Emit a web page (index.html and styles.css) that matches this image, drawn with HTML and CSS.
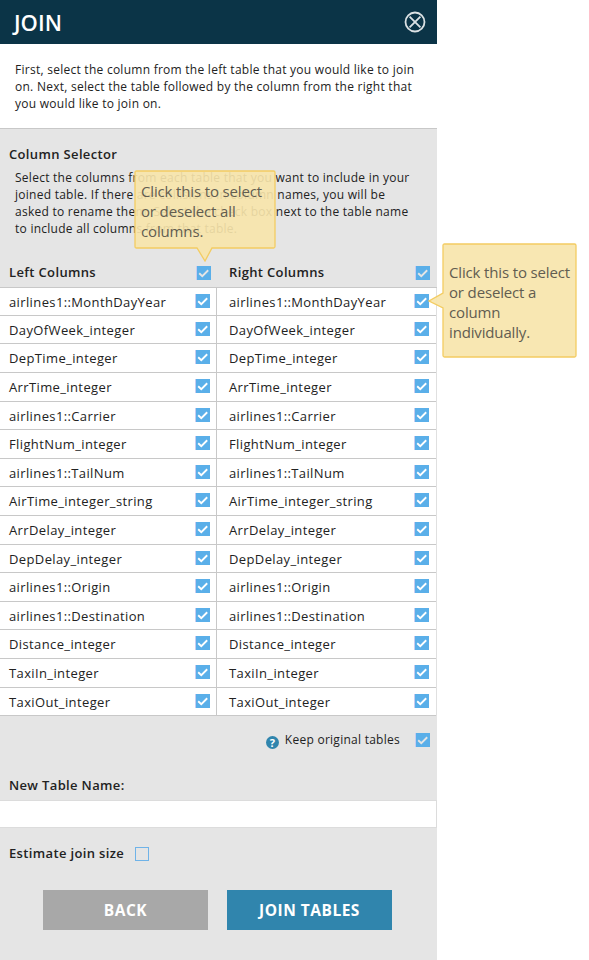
FILE: index.html
```html
<!DOCTYPE html>
<html lang="en">
<head>
<meta charset="utf-8">
<title>Join</title>
<link rel="stylesheet" href="styles.css">
</head>
<body>
<svg class="defs" width="0" height="0" aria-hidden="true">
  <symbol id="check" viewBox="0 0 15 14">
    <rect width="15" height="14" fill="#c9cdf0"/>
    <rect x="1" width="14" height="14" fill="#5aafe9"/>
    <path d="M3.2 7.2L6.3 10.1L12.2 4.3" fill="none" stroke="currentColor" stroke-width="1.9"/>
  </symbol>
</svg>
<main class="panel">
  <header class="bar">
    <h1>JOIN</h1>
    <svg class="close" viewBox="0 0 22 22"><circle cx="11" cy="11" r="9.5"/><path d="M5.6 5.6L16.4 16.4M16.4 5.6L5.6 16.4"/></svg>
  </header>
  <section class="intro">
    <p>First, select the column from the left table that you would like to join<br>on. Next, select the table followed by the column from the right that<br>you would like to join on.</p>
  </section>
  <section class="selector">
    <h2>Column Selector</h2>
    <p>Select the columns from each table that you want to include in your<br>joined table. If there are collisions in column names, you will be<br>asked to rename them. Select the check box next to the table name<br>to include all columns from that table.</p>
  </section>
  <div class="heads">
    <div class="head"><span>Left Columns</span><svg class="box"><use href="#check"/></svg></div>
    <div class="head"><span>Right Columns</span><svg class="box"><use href="#check"/></svg></div>
  </div>
  <div class="lists">
    <ul class="list">
      <li><span>airlines1::MonthDayYear</span><svg class="box"><use href="#check"/></svg></li>
      <li><span>DayOfWeek_integer</span><svg class="box"><use href="#check"/></svg></li>
      <li><span>DepTime_integer</span><svg class="box"><use href="#check"/></svg></li>
      <li><span>ArrTime_integer</span><svg class="box"><use href="#check"/></svg></li>
      <li><span>airlines1::Carrier</span><svg class="box"><use href="#check"/></svg></li>
      <li><span>FlightNum_integer</span><svg class="box"><use href="#check"/></svg></li>
      <li><span>airlines1::TailNum</span><svg class="box"><use href="#check"/></svg></li>
      <li><span>AirTime_integer_string</span><svg class="box"><use href="#check"/></svg></li>
      <li><span>ArrDelay_integer</span><svg class="box"><use href="#check"/></svg></li>
      <li><span>DepDelay_integer</span><svg class="box"><use href="#check"/></svg></li>
      <li><span>airlines1::Origin</span><svg class="box"><use href="#check"/></svg></li>
      <li><span>airlines1::Destination</span><svg class="box"><use href="#check"/></svg></li>
      <li><span>Distance_integer</span><svg class="box"><use href="#check"/></svg></li>
      <li><span>TaxiIn_integer</span><svg class="box"><use href="#check"/></svg></li>
      <li><span>TaxiOut_integer</span><svg class="box"><use href="#check"/></svg></li>
    </ul>
    <ul class="list">
      <li><span>airlines1::MonthDayYear</span><svg class="box"><use href="#check"/></svg></li>
      <li><span>DayOfWeek_integer</span><svg class="box"><use href="#check"/></svg></li>
      <li><span>DepTime_integer</span><svg class="box"><use href="#check"/></svg></li>
      <li><span>ArrTime_integer</span><svg class="box"><use href="#check"/></svg></li>
      <li><span>airlines1::Carrier</span><svg class="box"><use href="#check"/></svg></li>
      <li><span>FlightNum_integer</span><svg class="box"><use href="#check"/></svg></li>
      <li><span>airlines1::TailNum</span><svg class="box"><use href="#check"/></svg></li>
      <li><span>AirTime_integer_string</span><svg class="box"><use href="#check"/></svg></li>
      <li><span>ArrDelay_integer</span><svg class="box"><use href="#check"/></svg></li>
      <li><span>DepDelay_integer</span><svg class="box"><use href="#check"/></svg></li>
      <li><span>airlines1::Origin</span><svg class="box"><use href="#check"/></svg></li>
      <li><span>airlines1::Destination</span><svg class="box"><use href="#check"/></svg></li>
      <li><span>Distance_integer</span><svg class="box"><use href="#check"/></svg></li>
      <li><span>TaxiIn_integer</span><svg class="box"><use href="#check"/></svg></li>
      <li><span>TaxiOut_integer</span><svg class="box"><use href="#check"/></svg></li>
    </ul>
  </div>
  <div class="keep">
    <span class="help">?</span>
    <span class="keep-label">Keep original tables</span>
    <svg class="box"><use href="#check"/></svg>
  </div>
  <h2 class="name-label">New Table Name:</h2>
  <div class="field"></div>
  <div class="estimate"><span>Estimate join size</span><span class="empty-box"></span></div>
  <div class="actions">
    <button class="btn back">BACK</button>
    <button class="btn join">JOIN TABLES</button>
  </div>
</main>
<aside class="tip tip-all">
  <svg class="tip-shape" viewBox="0 0 142 92"><path d="M2.5 1H139.500Q141 1 141 2.500V76.500Q141 78 139.500 78H78L71 91L63 78H2.500Q1 78 1 76.500V2.500Q1 1 2.500 1Z"/></svg>
  <p>Click this to select<br>or deselect all<br>columns.</p>
</aside>
<aside class="tip tip-one">
  <svg class="tip-shape" viewBox="0 0 149 115"><path d="M16.500 1H146.500Q148 1 148 2.500V112.500Q148 114 146.500 114H16.500Q15 114 15 112.500V65L1 58L15 50V2.500Q15 1 16.500 1Z"/></svg>
  <p>Click this to select<br>or deselect a<br>column<br>individually.</p>
</aside>
</body>
</html>
```
FILE: styles.css
```css
* { box-sizing: border-box; }
body {
  margin: 0;
  position: relative;
  height: 960px;
  overflow: hidden;
  background: #fff;
  color: #222;
  font-family: "Open Sans", sans-serif;
}
h1, h2, p, ul { margin: 0; padding: 0; }
.defs { position: absolute; }
.panel { width: 437px; height: 960px; background: #e5e5e5; }
.bar {
  height: 44px;
  display: flex;
  align-items: center;
  justify-content: space-between;
  padding: 1px 11px 0 14px;
  background: #0b3447;
}
h1 { margin-top: -2px; color: #fff; font-size: 22px; font-weight: 600; line-height: 28px; letter-spacing: 0; }
.close { width: 22px; height: 22px; margin-top: -1px; fill: none; stroke: #dbe1e4; stroke-width: 1.8; }
.intro { height: 85px; padding: 17px 0 0 15px; background: #fff; border-bottom: 1px solid #c8c8c8; }
.intro p, .selector p { font-size: 12px; line-height: 17px; letter-spacing: 0.26px; white-space: nowrap; }
.selector { height: 129px; padding: 16px 0 0 9px; }
h2 { font-size: 13px; line-height: 18px; font-weight: 600; letter-spacing: 0.35px; }
.selector p { padding: 6px 0 0 6px; }
.box { width: 15px; height: 14px; color: #fff; flex: none; }
.heads { display: flex; height: 30px; border-bottom: 1px solid #c8c8c8; }
.head {
  width: 219px;
  display: flex;
  justify-content: space-between;
  padding: 5px 8px 0 9px;
  font-size: 13px;
  line-height: 18px;
  font-weight: 600;
  letter-spacing: 0.35px;
}
.head .box { margin-top: 3px; color: #e5e5e5; }
.head + .head { width: 218px; padding: 5px 7px 0 10px; }
.lists { display: flex; height: 428px; background: #fff; border-right: 1px solid #e0e0e0; }
.list {
  display: grid;
  grid-template-rows: 28px 28px 29px 29px 28px 29px 28px 29px 29px 28px 29px 28px 29px 29px 28px;
  list-style: none;
  width: 217px;
  border-right: 1px solid #c8c8c8;
}
.list + .list { width: 219px; border-right: 0; }
.list li {
  display: flex;
  justify-content: space-between;
  padding: 5px 6px 0 9px;
  border-bottom: 1px solid #c8c8c8;
  font-size: 13px;
  line-height: 18px;
  font-weight: 500;
  letter-spacing: 0.38px;
}
.list .box { margin-top: 1px; }
.list + .list li { padding: 5px 7px 0 12px; }
.keep { display: flex; justify-content: flex-end; height: 60px; padding: 15px 7px 0 0; font-size: 12px; line-height: 17px; letter-spacing: 0.26px; }
.help {
  width: 13px;
  height: 13px;
  margin: 5px 6px 0 0;
  border-radius: 50%;
  background: #3085ad;
  color: #fff;
  font-size: 11px;
  font-weight: 700;
  line-height: 13px;
  text-align: center;
  letter-spacing: 0;
}
.keep-label { margin-right: 15px; }
.keep .box { margin-top: 2px; color: #e5e5e5; }
.name-label { height: 24px; padding-left: 9px; }
.field { height: 28px; background: #fff; border: 1px solid #dcdcdc; border-left: 0; }
.estimate { display: flex; height: 62px; padding: 16px 0 0 9px; font-size: 13px; line-height: 18px; font-weight: 600; letter-spacing: 0.35px; }
.empty-box { width: 14px; height: 14px; margin: 3px 0 0 11px; border: 1px solid #6fb3e8; }
.actions { display: flex; gap: 19px; padding-left: 43px; }
.btn { width: 165px; height: 40px; border: 0; padding: 0; color: #fff; font: 700 15.5px/40px "Open Sans", sans-serif; letter-spacing: 0.5px; }
.back { background: #a8a8a8; }
.join { background: #3085ad; }
.tip { position: absolute; color: #625d50; font-size: 15px; line-height: 20px; letter-spacing: -0.15px; }
.tip p { position: relative; white-space: nowrap; }
.tip-shape { position: absolute; left: 0; top: 0; width: 100%; height: 100%; fill: rgba(247, 229, 170, 0.91); stroke: #f3cc62; stroke-width: 1.3; }
.tip-all { left: 134px; top: 170px; width: 142px; height: 92px; padding: 11px 0 0 7px; }
.tip-one { left: 428px; top: 243px; width: 149px; height: 115px; padding: 19px 0 0 21px; }
```
